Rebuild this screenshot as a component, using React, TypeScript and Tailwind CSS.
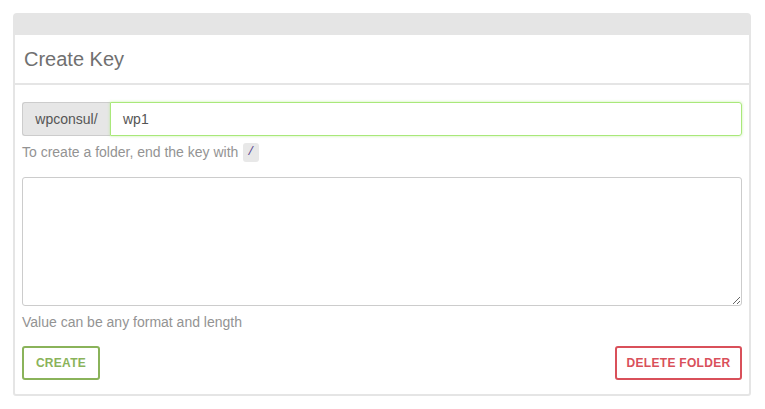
import React from "react";

export default function App() {
  return (
    <div className="w-[765px] h-[409px] bg-white pt-[13px] pl-[13px]" style={{ fontFamily: '"Liberation Sans", Arial, sans-serif' }}>
      <div className="w-[738px] border-2 border-[#e5e5e5] rounded-t-[4px] rounded-b-[3px] bg-white">
        <div className="h-[20px] bg-[#e5e5e5]" />
        <div className="h-[50px] flex items-center px-[9px] text-[20px] text-[#707070] border-b-2 border-[#e5e5e5]">
          Create Key
        </div>
        <div className="px-[7px] pt-[17px] pb-[14px]">
          <div className="flex h-[34px]">
            <div className="w-[88px] flex items-center justify-center bg-[#e6e6e6] border border-[#cccccc] border-r-0 rounded-l-[3px] text-[14px] text-[#555]">
              wpconsul/
            </div>
            <div className="flex-1 flex items-center pl-[12px] border border-[#a9e87a] rounded-r-[3px] shadow-[0_0_3px_rgba(160,230,110,0.6)] text-[14px] text-[#555]">
              wp1
            </div>
          </div>
          <div className="mt-[6px] h-[20px] flex items-center text-[14px] text-[#939393]">
            To create a folder, end the key with
            <span className="ml-[5px] px-[4px] h-[19px] flex items-center rounded-[3px] bg-[#e8e8e8] text-[12px] text-[#5b4a90]" style={{ fontFamily: '"Liberation Mono", monospace' }}>/</span>
          </div>
          <textarea className="mt-[15px] block w-full h-[129px] border border-[#cccccc] rounded-[3px] outline-none resize-y" />
          <div className="mt-[6px] h-[20px] flex items-center text-[14px] text-[#939393]">
            Value can be any format and length
          </div>
          <div className="mt-[14px] flex justify-between">
            <button className="w-[78px] h-[34px] border-2 border-[#8ab35a] rounded-[3px] text-[12px] font-bold text-[#8ab35a] tracking-[0.3px]">
              CREATE
            </button>
            <button className="w-[127px] h-[34px] border-2 border-[#d9505a] rounded-[3px] text-[12px] font-bold text-[#d9505a] tracking-[0.3px]">
              DELETE FOLDER
            </button>
          </div>
        </div>
      </div>
    </div>
  );
}
